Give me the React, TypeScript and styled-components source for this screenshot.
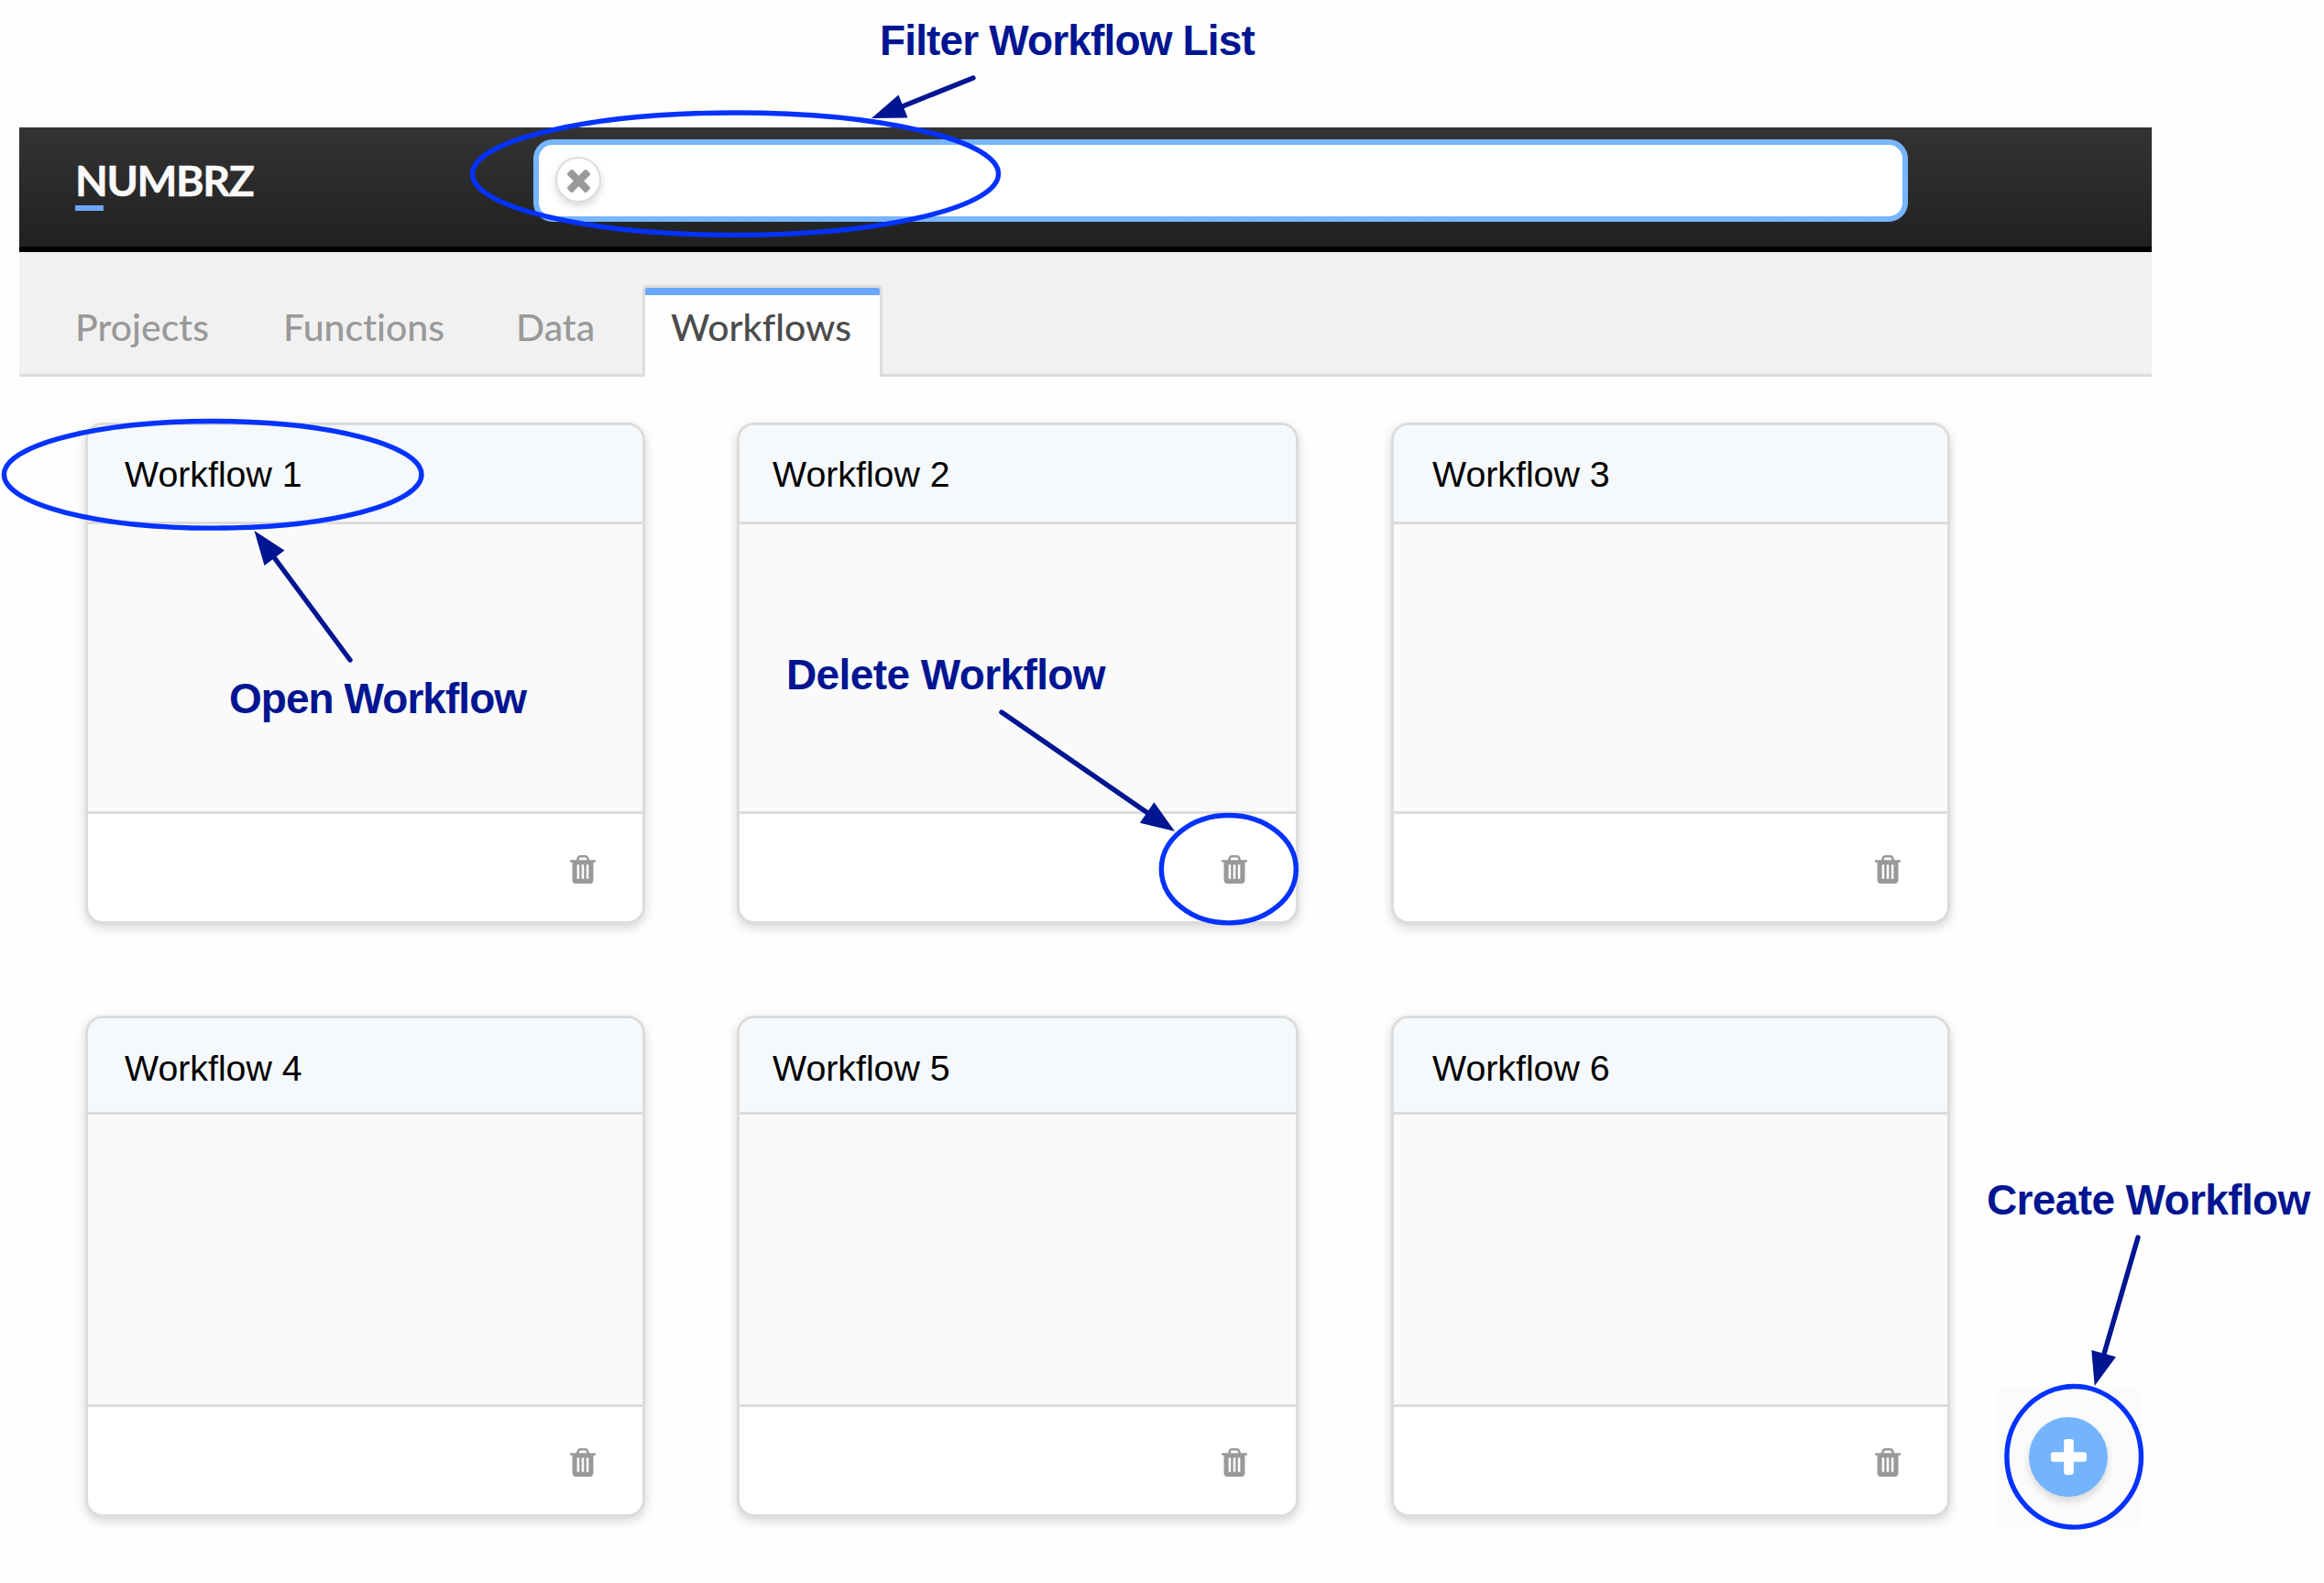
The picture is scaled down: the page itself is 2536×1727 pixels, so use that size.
import React from "react";
import styled, { createGlobalStyle } from "styled-components";

const GlobalStyle = createGlobalStyle`
  * { box-sizing: border-box; }
  html, body { margin: 0; padding: 0; background: #fefefe; }
`;

const Page = styled.div`
  position: relative;
  width: 2536px;
  height: 1727px;
  overflow: hidden;
  padding: 139px 188px 0 21px;
  background: #fefefe;
`;

const Header = styled.header`
  display: flex;
  align-items: flex-start;
  height: 136px;
  padding: 13px 0 0 61px;
  background: linear-gradient(#333, #212121);
  border-bottom: 6px solid #000;
`;

const Logo = styled.div`
  width: 500px;
  padding-top: 15px;
  font: 700 46.5px/58px Lato, sans-serif;
  letter-spacing: -1.4px;
  -webkit-text-stroke: 0.5px #fafafa;
  color: #fafafa;
  &::after {
    content: "";
    display: block;
    width: 31px;
    height: 6px;
    margin-top: -1px;
    background: #6ba6ff;
  }
`;

const Search = styled.div`
  display: flex;
  align-items: center;
  width: 1500px;
  height: 90px;
  padding-left: 18px;
  background: #fff;
  border: 6px solid #77b5ff;
  border-radius: 21px;
`;

const ClearButton = styled.button`
  display: flex;
  align-items: center;
  justify-content: center;
  width: 50px;
  height: 50px;
  margin-top: -2px;
  padding: 2px 0 0 1px;
  background: #fff;
  border: 2px solid #ddd;
  border-radius: 50%;
  box-shadow: 0 4px 8px rgba(0, 0, 0, 0.15);
  color: #999;
`;

const Tabs = styled.nav`
  display: flex;
  align-items: flex-end;
  height: 136px;
  padding-left: 61px;
  background: #f1f1f1;
  border-bottom: 3px solid #dcdcdc;
`;

const Tab = styled.a<{ $width: number; $active?: boolean }>`
  width: ${(p) => p.$width}px;
  height: 100px;
  flex: none;
  font: 500 41px/50px Lato, sans-serif;
  font-variant-ligatures: none;
  padding-top: ${(p) => (p.$active ? "18px" : "24px")};
  color: ${(p) => (p.$active ? "#4c4c4c" : "#999")};
  ${(p) =>
    p.$active &&
    `
    padding-left: 28px;
    margin-bottom: -3px;
    border: 3px solid #dcdcdc;
    border-bottom: 0;
    border-radius: 5px 5px 0 0;
    background: linear-gradient(#6ba6ff 8px, #fefefe 8px);
  `}
`;

const Grid = styled.main`
  display: grid;
  grid-template-columns: 611px 613px 611px;
  column-gap: 100px;
  row-gap: 100px;
  padding: 50px 0 0 72px;
`;

const Card = styled.section<{ $head: number; $body: number }>`
  display: grid;
  grid-template-rows: ${(p) => p.$head}px ${(p) => p.$body}px 1fr;
  height: 547px;
  overflow: hidden;
  background: #fff;
  border: 3px solid #dcdcdc;
  border-radius: 19px;
  box-shadow: 0 4px 12px rgba(0, 0, 0, 0.17);
  &:nth-child(3n) {
    margin-left: 1px;
  }
`;

const CardTitle = styled.h2<{ $indent: number; $top: number }>`
  margin: 0;
  padding: ${(p) => p.$top}px 0 0 ${(p) => p.$indent}px;
  background: #f5f9fc;
  border-bottom: 3px solid #dcdcdc;
  font: 400 39.3px/44px "Liberation Sans", Arial, sans-serif;
  color: #000;
`;

const CardBody = styled.div`
  background: #fafafa;
  border-bottom: 3px solid #dcdcdc;
`;

const CardFooter = styled.div<{ $inset: number }>`
  display: flex;
  justify-content: flex-end;
  align-items: center;
  padding: 3px ${(p) => p.$inset}px 0 0;
  color: #999;
`;

const CreateArea = styled.div`
  position: absolute;
  left: 2178px;
  top: 1514px;
  width: 158px;
  height: 152px;
  padding: 32px 0 0 36px;
  background: #fbfbfb;
`;

const CreateButton = styled.button`
  display: flex;
  align-items: center;
  justify-content: center;
  width: 86px;
  height: 87px;
  padding: 0;
  border: 0;
  border-radius: 50%;
  background: #74b4ff;
  color: #fff;
  box-shadow: 0 5px 9px rgba(0, 0, 0, 0.14);
`;

const Overlay = styled.svg`
  position: absolute;
  left: 0;
  top: 0;
`;

const Note = styled.div<{ $x: number; $y: number; $spacing: number }>`
  position: absolute;
  left: ${(p) => p.$x}px;
  top: ${(p) => p.$y}px;
  font: 700 46px/52px "Liberation Sans", Arial, sans-serif;
  letter-spacing: ${(p) => p.$spacing}px;
  white-space: nowrap;
  color: #001591;
`;

const TrashIcon = () => (
  <svg width="28" height="31" viewBox="192 128 1408 1536" preserveAspectRatio="none" fill="currentColor">
    <path d="M704 1376v-704q0-14-9-23t-23-9h-64q-14 0-23 9t-9 23v704q0 14 9 23t23 9h64q14 0 23-9t9-23zm256 0v-704q0-14-9-23t-23-9h-64q-14 0-23 9t-9 23v704q0 14 9 23t23 9h64q14 0 23-9t9-23zm256 0v-704q0-14-9-23t-23-9h-64q-14 0-23 9t-9 23v704q0 14 9 23t23 9h64q14 0 23-9t9-23zm-544-992h448l-48-117q-7-9-17-11h-317q-10 2-17 11zm928 32v64q0 14-9 23t-23 9h-96v948q0 83-47 143.5t-113 60.5h-832q-66 0-113-58.5t-47-141.5v-952h-96q-14 0-23-9t-9-23v-64q0-14 9-23t23-9h309l70-167q15-37 54-63t79-26h320q40 0 79 26t54 63l70 167h309q14 0 23 9t9 23z" />
  </svg>
);

const TimesIcon = () => (
  <svg width="25" height="25" viewBox="302 366 1188 1188" fill="currentColor">
    <path d="M1490 1322q0 40-28 68l-136 136q-28 28-68 28t-68-28l-294-294-294 294q-28 28-68 28t-68-28l-136-136q-28-28-28-68t28-68l294-294-294-294q-28-28-28-68t28-68l136-136q28-28 68-28t68 28l294 294 294-294q28-28 68-28t68 28l136 136q28 28 28 68t-28 68l-294 294 294 294q28 28 28 68z" />
  </svg>
);

const PlusIcon = () => (
  <svg width="39" height="39" viewBox="192 128 1408 1408" fill="currentColor">
    <path d="M1600 736v192q0 40-28 68t-68 28h-416v416q0 40-28 68t-68 28h-192q-40 0-68-28t-28-68v-416h-416q-40 0-68-28t-28-68v-192q0-40 28-68t68-28h416v-416q0-40 28-68t68-28h192q40 0 68 28t28 68v416h416q40 0 68 28t28 68z" />
  </svg>
);

const workflows = [1, 2, 3, 4, 5, 6].map((n) => ({
  name: `Workflow ${n}`,
  indent: [40, 36, 42][(n - 1) % 3],
  inset: [51, 53, 51][(n - 1) % 3],
  top: n > 3 ? 32 : 31,
  head: n > 3 ? 105 : 108,
  body: n > 3 ? 319 : 316,
}));

const ellipses = [
  [802.5, 189.7, 287, 66.7],
  [232.2, 517.8, 227.8, 58.3],
  [1340.8, 948.2, 73.5, 58.7],
  [2263.2, 1589.3, 73.3, 76.8],
];

const arrows = [
  { line: "M1062 85L985 116", head: "951,129 980.5,103.5 990.6,128.5" },
  { line: "M382 720L299 608", head: "277.5,579 310.5,600.5 288.5,617" },
  { line: "M1093 777L1251 886", head: "1282,907 1259.4,875.3 1243.8,897.7" },
  { line: "M2333 1350L2296 1477", head: "2285.7,1512 2282.3,1473 2309,1480.3" },
];

export default function App() {
  return (
    <Page>
      <GlobalStyle />
      <Header>
        <Logo>NUMBRZ</Logo>
        <Search>
          <ClearButton>
            <TimesIcon />
          </ClearButton>
        </Search>
      </Header>
      <Tabs>
        <Tab $width={227}>Projects</Tab>
        <Tab $width={254}>Functions</Tab>
        <Tab $width={138}>Data</Tab>
        <Tab $width={262} $active>
          Workflows
        </Tab>
      </Tabs>
      <Grid>
        {workflows.map((w) => (
          <Card key={w.name} $head={w.head} $body={w.body}>
            <CardTitle $indent={w.indent} $top={w.top}>
              {w.name}
            </CardTitle>
            <CardBody />
            <CardFooter $inset={w.inset}>
              <TrashIcon />
            </CardFooter>
          </Card>
        ))}
      </Grid>
      <CreateArea>
        <CreateButton>
          <PlusIcon />
        </CreateButton>
      </CreateArea>
      <Overlay width="2536" height="1727" fill="none">
        {ellipses.map(([cx, cy, rx, ry]) => (
          <ellipse key={cx} cx={cx} cy={cy} rx={rx} ry={ry} stroke="#0432ff" strokeWidth="5.4" />
        ))}
        {arrows.map((a) => (
          <g key={a.line}>
            <path d={a.line} stroke="#001591" strokeWidth="5.4" strokeLinecap="round" />
            <polygon points={a.head} fill="#001591" />
          </g>
        ))}
      </Overlay>
      <Note $x={960} $y={18} $spacing={-0.85}>Filter Workflow List</Note>
      <Note $x={250} $y={736} $spacing={-0.95}>Open Workflow</Note>
      <Note $x={858} $y={710} $spacing={-0.6}>Delete Workflow</Note>
      <Note $x={2168} $y={1283} $spacing={-0.63}>Create Workflow</Note>
    </Page>
  );
}
